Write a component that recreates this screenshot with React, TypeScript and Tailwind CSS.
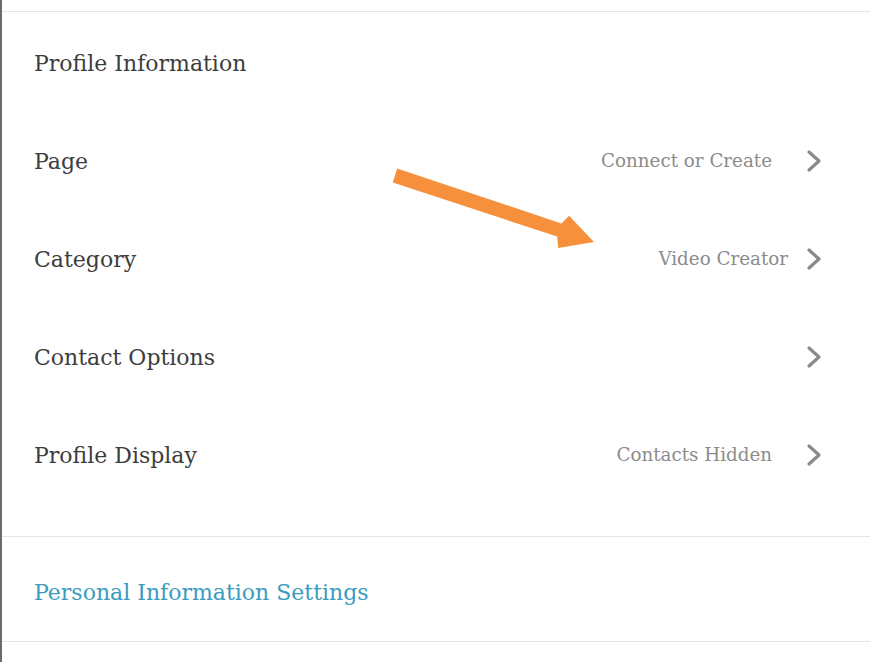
import React from "react";

const rows = [
  { label: "Page", value: "Connect or Create", gap: "gap-[34px]" },
  { label: "Category", value: "Video Creator", gap: "gap-[18px]" },
  { label: "Contact Options", value: "", gap: "gap-[34px]" },
  { label: "Profile Display", value: "Contacts Hidden", gap: "gap-[34px]" },
];

const Chevron = () => (
  <svg width="16" height="24" viewBox="0 0 16 24" className="shrink-0">
    <polyline
      points="3,3 13,12 3,21"
      fill="none"
      stroke="#8a8a8a"
      strokeWidth="3.2"
      strokeLinecap="round"
      strokeLinejoin="round"
    />
  </svg>
);

export default function App() {
  return (
    <div
      className="relative w-[870px] h-[662px] bg-white overflow-hidden border-l-2 border-[#6b6b6b]"
      style={{ fontFamily: '"DejaVu Serif", serif' }}
    >
      <div className="mt-[11px] border-t border-[#e6e6e6]">
        {/* Profile section */}
        <div className="pt-[2px] pb-[32px]">
          <div className="h-[98px] flex items-center pl-[32px] text-[22px] text-[#3d3d3d]">
            Profile Information
          </div>
          {rows.map((r) => (
            <div
              key={r.label}
              className="h-[98px] flex items-center justify-between pl-[32px] pr-[48px]"
            >
              <span className="text-[22px] text-[#3d3d3d]">{r.label}</span>
              <div className={`flex items-center ${r.gap}`}>
                {r.value && (
                  <span className="text-[18.3px] text-[#8c8c8c]">{r.value}</span>
                )}
                <Chevron />
              </div>
            </div>
          ))}
        </div>

        <div className="border-t border-[#e6e6e6] h-[105px] flex items-center pl-[32px] pt-[6px]">
          <span className="text-[22px] text-[#3a9cc0]">Personal Information Settings</span>
        </div>
        <div className="border-t border-[#e6e6e6]" />
      </div>

      {/* annotation arrow */}
      <svg
        className="absolute left-0 top-0 pointer-events-none"
        width="870"
        height="662"
        viewBox="0 0 870 662"
      >
        <polygon
          points="390.8,182.6 395.2,168.4 559.4,223.5 567.1,215.7 592,242 556.3,247.9 555.1,236.6"
          fill="#f6903c"
        />
      </svg>
    </div>
  );
}
